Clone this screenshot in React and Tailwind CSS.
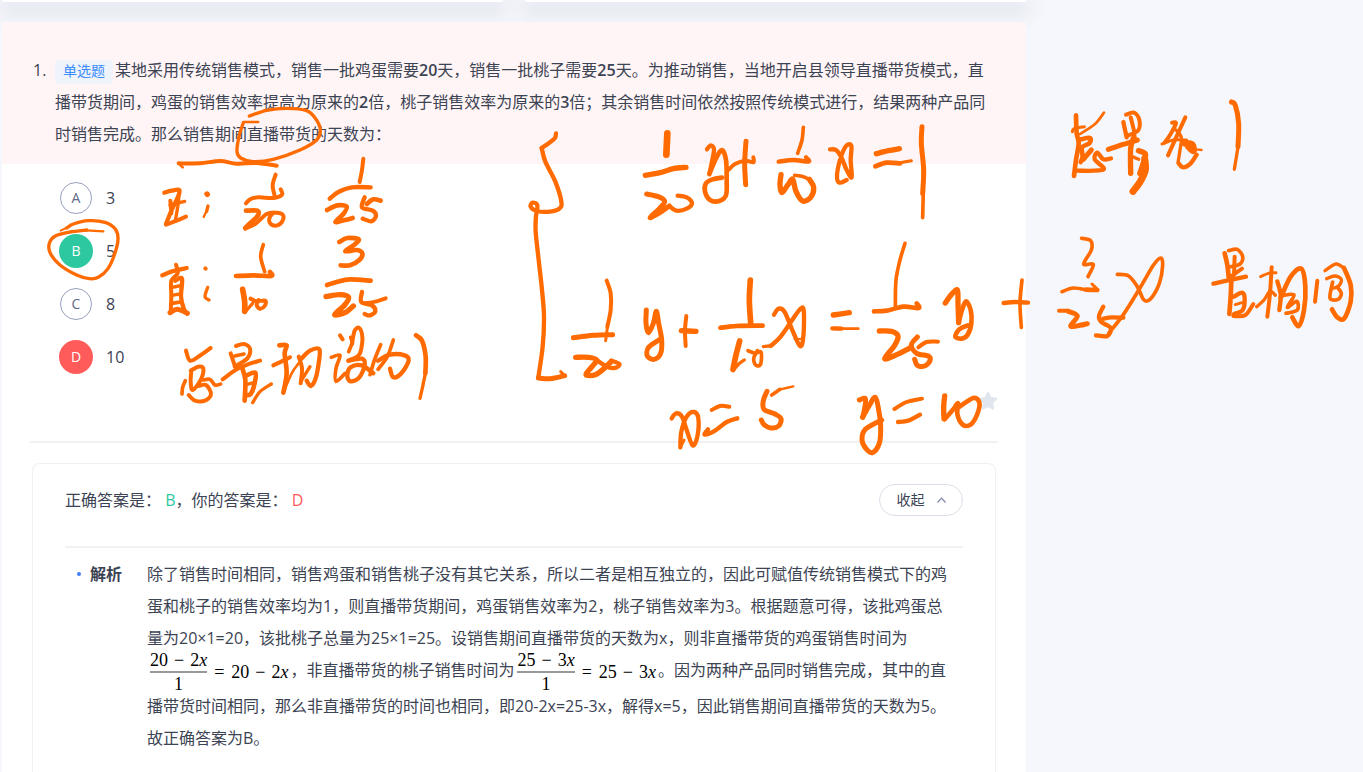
import React from "react";

/* Pen strokes: each group has an origin on the page and strokes of
   [width, x1, y1, x2, y2, ...] on a grid three times finer than the page. */
const INK = [
  { x: 0, y: 0, strokes: [
    [9, 748,348, 800,331, 860,325, 920,332, 948,358, 961,390, 950,420, 900,450, 820,478, 760,485, 722,474, 711,455, 717,410, 730,368],
    [6, 730,366, 775,366],
    [11, 536,490, 600,490, 660,483, 710,491, 770,489, 830,497],
    [7, 536,490, 548,502],
  ]},
  { x: 30, y: 150, strokes: [
    [9, 110,234, 130,222, 175,212, 225,217, 256,237, 264,268, 254,312, 234,356, 205,382, 178,386, 140,375, 90,345, 61,310, 58,280, 76,258, 120,246, 170,240],
    [5, 92,242, 120,228],
    [6, 168,241, 220,244],
    [12, 403,128, 425,122, 448,120, 444,140, 425,180, 408,222],
    [11, 408,224, 440,212, 468,200],
    [11, 421,152, 424,190],
    [9, 420,165, 464,154],
    [9, 448,122, 444,165, 436,212],
    [15, 531,132, 532,133],
    [9, 534,168, 530,184],
    [6, 531,180, 521,201],
    [12, 397,376, 430,363, 470,354],
    [11, 438,344, 443,370, 424,392, 424,440, 422,486],
    [12, 436,392, 456,386, 453,440, 462,478, 472,490],
    [14, 420,488, 442,478, 472,490],
    [9, 426,412, 452,407],
    [9, 426,436, 450,432],
    [10, 426,460, 452,456],
    [11, 526,355, 527,356],
    [9, 533,412, 525,440, 537,450],
    [11, 468,602, 480,632, 508,618, 542,594],
    [11, 482,662, 505,650, 520,656, 512,690, 488,720, 482,695, 484,662],
    [10, 466,692, 458,712, 456,732],
    [11, 476,735, 495,752, 525,752, 543,732, 528,705, 506,708],
    [10, 520,690, 540,688, 555,705, 572,702],
  ]},
  { x: 230, y: 90, strokes: [
    [11, 2,790, 14,826],
    [11, 18,768, 42,762, 60,776, 52,805, 14,830],
    [10, 14,798, 42,792],
    [11, -22,868, 20,838, 56,822, 90,812],
    [13, 36,832, 46,870, 44,932],
    [13, 50,856, 76,848, 74,880, 62,912, 46,915],
    [9, 48,884, 72,878],
    [9, 68,938, 90,905, 124,882],
    [13, 148,766, 170,766, 164,790, 170,850, 160,908],
    [11, 130,826, 160,812, 180,802],
    [7, 160,908, 185,850, 206,820],
    [11, 206,800, 216,835, 212,880],
    [12, 214,806, 240,782, 268,778, 266,820, 256,868, 242,888, 230,872],
    [9, 214,872, 240,830],
    [11, 330,736, 338,748],
    [10, 304,802, 330,796, 318,835, 318,874, 345,850],
    [10, 356,785, 366,758, 362,742],
    [11, 366,762, 374,722, 388,714, 397,740, 394,775, 386,796, 355,812],
    [12, 355,812, 396,806, 404,826, 388,862, 362,874, 352,858, 362,832, 395,826, 430,850],
    [10, 420,854, 434,808, 452,764],
    [10, 490,750, 472,800, 444,838],
    [12, 444,812, 480,794, 524,796, 536,812, 514,850, 490,862, 480,836],
    [13, 558,736, 576,752, 587,800, 586,850],
    [9, 587,845, 578,890, 570,925],
    [11, 137,254, 128,285, 134,318],
    [11, 152,298, 156,314, 130,324, 85,322, 60,328, 48,340],
    [13, 48,362, 82,362, 84,376, 62,398, 46,414],
    [11, 46,416, 78,400, 110,372, 140,368, 158,374, 158,392, 142,406, 122,402, 118,385, 128,370],
    [11, 400,206, 396,240, 389,276],
    [12, 299,326, 325,306, 365,292, 422,292],
    [13, 291,360, 322,346, 350,350, 340,372, 316,396, 345,390, 368,384],
    [12, 404,322, 396,352, 428,362, 438,378, 424,394, 398,386],
    [13, 410,342, 430,328, 452,332],
    [10, 100,464, 92,500, 104,545],
    [13, 18,558, 70,556, 124,558, 120,546],
    [16, 38,598, 44,635, 44,664],
    [9, 46,665, 68,640],
    [11, 62,626, 80,634, 106,632, 104,648, 90,656, 80,645, 86,630],
    [13, 328,456, 352,444, 386,448, 372,465, 346,484, 380,480, 397,490, 388,510, 360,526, 332,526],
    [13, 291,585, 320,576, 360,568, 422,572],
    [15, 288,620, 330,614, 356,622, 344,645, 314,674, 345,668, 370,648],
    [12, 396,606, 394,636, 426,646, 436,664, 420,676, 404,672],
    [11, 404,640, 440,634, 467,625],
  ]},
  { x: 510, y: 110, strokes: [
    [12, 138,70, 135,84, 118,98, 95,114],
    [12, 95,114, 106,155, 136,215, 154,275, 148,296, 120,305, 80,303, 62,290, 68,278, 82,286, 78,320, 77,365, 86,450, 96,540, 102,620, 98,710, 85,802],
    [14, 85,804, 120,806, 164,797],
    [8, 164,797, 152,785],
    [19, 472,70, 469,134],
    [15, 406,196, 450,188, 490,176, 528,172],
    [14, 410,252, 445,260, 464,274, 448,296, 420,323, 450,308, 478,288],
    [12, 478,288, 500,302, 530,296, 546,280, 530,262, 503,257],
    [11, 290,512, 302,550, 302,600, 292,650],
    [8, 293,645, 287,692],
    [14, 190,683, 250,676, 308,674],
    [15, 197,742, 235,742, 260,750, 244,772, 228,794, 256,794, 284,774, 304,754],
    [12, 304,752, 328,762, 318,773, 295,772, 262,752],
    [14, 409,600, 408,640, 415,668, 430,640, 439,604, 446,640, 455,690, 452,730, 432,748, 412,738, 416,712, 450,688],
    [11, 529,618, 525,660, 527,708],
    [15, 514,662, 558,664],
    [10, 630,654, 666,648],
  ]},
  { x: 700, y: 110, strokes: [
    [12, 21,118, 32,106, 42,118, 36,155, 28,192],
    [13, 28,192, 48,145, 66,120, 78,150, 80,210, 78,256, 58,273, 30,270, 15,245, 18,220, 38,208, 66,203],
    [11, 85,180, 105,162, 135,152, 160,157, 160,142],
    [14, 138,94, 134,160, 137,224],
    [10, 310,52, 306,90, 293,130],
    [12, 236,155, 280,150, 326,155, 318,142],
    [15, 243,194, 240,225, 246,248, 264,224, 278,208, 288,244, 308,273, 332,262, 341,232, 328,208],
    [10, 330,210, 310,200, 284,196],
    [12, 390,118, 408,120, 424,142, 440,180, 455,202, 452,150, 454,108, 438,108, 420,150, 411,198, 418,218, 440,210],
    [15, 529,131, 565,122, 598,116],
    [13, 526,169, 560,158, 600,160],
    [8, 598,159, 634,152],
    [14, 666,50, 664,100, 671,180, 668,250],
    [10, 670,240, 668,323],
  ]},
  { x: 700, y: 260, strokes: [
    [10, 615,-50, 600,0, 588,60, 586,140],
    [13, 522,154, 560,152, 610,140, 656,144, 650,130],
    [15, 538,213, 575,214, 594,228, 584,256, 554,296, 590,284, 630,264],
    [14, 652,231, 634,255, 650,280, 685,288, 690,302, 674,318, 652,316, 644,298],
    [11, 655,262, 680,246, 714,245],
    [15, 736,129, 754,104, 772,90, 774,130, 776,188],
    [13, 776,188, 786,150, 798,124, 812,150, 814,190, 802,226, 784,236, 766,230, 778,208, 804,196],
    [12, 911,129, 945,126, 984,128],
    [10, 966,60, 960,130, 964,202],
    [16, 151,60, 148,120, 152,188],
    [13, 62,203, 110,198, 188,197],
    [16, 119,243, 108,285, 99,328],
    [9, 99,332, 116,312, 133,300],
    [10, 144,272, 165,280, 183,276, 182,312, 168,316, 161,296, 172,272],
    [12, 222,164, 236,146, 254,156, 276,208, 300,258, 310,230, 311,150, 298,150, 270,190, 240,232, 212,258],
    [9, 214,257, 190,260],
    [5, 284,238, 306,236],
    [15, 400,165, 448,158],
    [12, 397,205, 425,206],
    [7, 425,206, 475,206],
    [11, 35,450, 60,438, 88,440],
    [12, 112,475, 80,486, 45,512, 14,524, 24,508],
    [14, 201,394, 190,422, 192,448, 225,462, 243,476, 236,498, 212,504, 192,494, 184,480],
    [10, 215,405, 240,388],
    [6, 238,389, 280,379],
    [14, 478,420, 496,416, 494,445, 488,472],
    [14, 488,472, 508,436, 526,412, 536,450, 542,500, 538,550, 518,578, 498,566, 486,540, 496,508, 545,480],
    [11, 583,447, 620,426, 666,416],
    [12, 594,486, 625,482, 660,464],
    [15, 734,408, 731,440, 732,476],
    [13, 734,478, 760,448, 774,430, 772,462, 788,494, 812,494, 832,462, 838,428, 820,414, 776,442],
  ]},
  { x: 560, y: 270, strokes: [
    [12, 335,445, 348,430, 366,440, 380,480, 398,526, 412,500, 415,445, 402,426, 380,440, 364,485, 361,532],
    [8, 361,532, 372,510],
  ]},
  { x: 1040, y: 80, strokes: [
    [13, 108,106, 110,160, 116,190, 108,240, 102,288],
    [8, 97,155, 102,146, 133,140],
    [7, 192,98, 165,132, 120,162],
    [13, 122,178, 150,174, 148,190, 126,202, 128,230, 122,246],
    [14, 130,238, 154,210],
    [12, 106,272, 190,269, 164,238, 172,218, 190,238, 213,235],
    [12, 250,126, 260,172],
    [11, 258,104, 282,98, 298,120, 294,152, 264,166],
    [11, 272,112, 284,160],
    [14, 205,208, 240,196, 292,180],
    [15, 282,170, 272,205, 272,280],
    [16, 296,212, 316,222, 310,250, 300,280],
    [20, 314,236, 316,270, 300,306, 279,334],
    [9, 278,230, 296,238],
    [11, 396,128, 408,130, 390,165, 374,188],
    [8, 366,192, 400,180, 440,180],
    [11, 436,112, 414,160, 384,226],
    [9, 408,150, 424,172, 420,210, 414,248],
    [12, 416,250, 430,262, 452,250, 470,224],
    [20, 436,190, 456,194, 460,212, 446,200],
    [6, 465,208, 485,210],
    [14, 574,66, 586,76, 596,130, 594,200],
    [9, 595,195, 583,268],
    [10, 125,475, 152,482, 154,510, 131,552, 160,553, 144,590],
    [10, 66,635, 100,624, 140,630],
    [13, 138,629, 172,630],
    [8, 172,628, 156,612],
    [11, 57,692, 85,692],
    [14, 85,694, 112,708, 92,738, 120,736, 142,731],
    [12, 190,680, 177,708, 184,726, 212,744, 202,768, 168,766],
    [12, 190,716, 215,712, 250,713],
    [10, 206,760, 250,704, 300,624, 340,556, 362,534, 368,556, 358,610, 332,656, 312,660, 292,620, 266,588, 232,583],
    [13, 554,520, 562,555, 566,592],
    [10, 566,512, 592,508, 608,530, 600,552, 572,560],
    [11, 584,530, 582,585],
    [11, 572,590, 606,566],
    [12, 520,611, 550,604, 618,590],
    [13, 574,600, 572,650, 568,702],
    [12, 582,650, 606,638, 614,655, 608,690, 582,702],
    [8, 586,674, 606,668],
    [11, 580,708, 615,706, 640,672],
    [8, 662,590, 685,580, 708,578],
    [11, 695,562, 690,640, 682,710],
    [9, 650,680, 672,660, 690,634, 706,646],
    [12, 712,604, 722,645, 718,690],
    [13, 722,654, 752,590, 784,566, 796,620, 792,690, 776,738, 757,712],
    [10, 730,646, 762,645, 742,682, 770,664, 772,690, 738,700],
    [11, 832,602, 825,665],
    [9, 855,572, 888,552, 914,566],
    [13, 912,564, 932,615, 932,665, 912,716, 892,712, 876,688],
    [9, 860,596, 884,588, 904,598, 896,618, 876,626],
    [10, 892,622, 904,640, 894,658, 870,654, 878,606],
  ]},
];

/* Smooth curve through the stroke's points (Catmull-Rom as cubic Béziers). */
function curve([, ...n]) {
  const p = [];
  for (let i = 0; i < n.length; i += 2) p.push([n[i], n[i + 1]]);
  let d = `M${p[0][0]} ${p[0][1]}`;
  for (let i = 0; i < p.length - 1; i++) {
    const a = p[i - 1] || p[i], b = p[i], c = p[i + 1], e = p[i + 2] || c;
    d += `C${b[0] + (c[0] - a[0]) / 6} ${b[1] + (c[1] - a[1]) / 6} ${c[0] - (e[0] - b[0]) / 6} ${c[1] - (e[1] - b[1]) / 6} ${c[0]} ${c[1]}`;
  }
  return d;
}

function Ink() {
  return (
    <svg
      aria-hidden="true"
      className="pointer-events-none absolute top-0 left-0 h-[772px] w-[1363px]"
      viewBox="0 0 1363 772"
      fill="none"
      stroke="#ff6b00"
      strokeLinecap="round"
      strokeLinejoin="round"
    >
      {INK.map((g, i) => (
        <g key={i} transform={`translate(${g.x} ${g.y}) scale(${1 / 3})`}>
          {g.strokes.map((s, j) => (
            <path key={j} d={curve(s)} strokeWidth={s[0] + 1} />
          ))}
        </g>
      ))}
    </svg>
  );
}

const OPTIONS = [
  { letter: "A", value: "3", look: "size-8 border border-[#98a1bb] text-[#5f6b8a]" },
  { letter: "B", value: "5", look: "size-[34px] bg-[#2dc8a0] text-white" },
  { letter: "C", value: "8", look: "size-8 border border-[#98a1bb] text-[#5f6b8a]" },
  { letter: "D", value: "10", look: "size-[34px] bg-[#ff5b5b] text-white" },
];

function Num({ children }) {
  return <b className="font-semibold">{children}</b>;
}

function Equation({ n, k }) {
  const expr = (
    <span className="flex gap-[6px]">
      <span>{n}</span>
      <span>−</span>
      <span>{k}<i>x</i></span>
    </span>
  );
  return (
    <span className="mr-0.5 ml-[3px] inline-flex h-9 items-center gap-[7px] align-middle font-['Liberation_Serif',serif] text-lg leading-[22px] text-black">
      <span className="flex flex-col items-center">
        {expr}
        <span className="h-0.5 w-full bg-[#999]" />
        <span>1</span>
      </span>
      <span>=</span>
      {expr}
    </span>
  );
}

export default function App() {
  return (
    <div
      lang="zh-CN"
      className="relative flex min-h-screen flex-col overflow-hidden bg-[#f5f7fc] pl-0.5 font-['Open_Sans','Noto_Sans_CJK_SC',sans-serif] text-base text-[#3c4353]"
    >
      <div className="flex w-full max-w-[1024px] flex-1 flex-col">
        <div className="flex gap-[22px] pb-5">
          <div className="h-0.5 flex-1 rounded-b-lg bg-white shadow-[0_6px_20px_4px_rgba(60,70,100,0.16)]" />
          <div className="h-0.5 flex-1 rounded-b-lg bg-white shadow-[0_6px_20px_4px_rgba(60,70,100,0.16)]" />
        </div>

        <main className="relative flex flex-1 flex-col bg-white">
          <section className="flex bg-[#fff5f6] pt-8 pr-8 pb-[14px] pl-[31px] leading-8">
            <span className="w-[22px] shrink-0">1.</span>
            <p className="flex-1">
              <span className="mr-[2px] inline-block h-6 rounded bg-[#eff3fa] px-2 align-middle text-sm leading-[22px] text-[#3b8cff]">单选题</span>
              某地采用传统销售模式，销售一批鸡蛋需要<Num>20</Num>天，销售一批桃子需要<Num>25</Num>天。为推动销售，当地开启县领导直播带货模式，直播带货期间，鸡蛋的销售效率提高为原来的<Num>2</Num>倍，桃子销售效率为原来的<Num>3</Num>倍；其余销售时间依然按照传统模式进行，结果两种产品同时销售完成。那么销售期间直播带货的天数为：
            </p>
          </section>

          <div className="flex flex-col items-start gap-[19px] pt-[17px] pl-14">
            {OPTIONS.map((o) => (
              <button key={o.letter} type="button" className="flex h-[34px] items-center gap-3">
                <span className="flex w-9 justify-center">
                  <span className={`flex items-center justify-center rounded-full text-sm ${o.look}`}>{o.letter}</span>
                </span>
                <span>{o.value}</span>
              </button>
            ))}
          </div>

          <div className="mx-7 flex justify-end border-b-2 border-[#f1f1f3] pt-[17px] pb-[30px]">
            <button type="button" aria-label="收藏" className="size-5">
              <svg viewBox="0 0 20 20" fill="#e1e5ee" stroke="#e1e5ee" strokeWidth="2" strokeLinejoin="round">
                <path d="M10 1.8 12.5 7l5.700.8-4.100 4 1 5.700L10 14.800 4.900 17.500l1-5.700-4.100-4L7.500 7Z" />
              </svg>
            </button>
          </div>

          <section className="mx-[30px] mt-5 flex flex-1 flex-col rounded-t-lg border border-b-0 border-[#f0f0f2] px-8 pt-5">
            <div className="flex items-start justify-between border-b-2 border-[#f1f1f3] pb-[30px]">
              <p className="leading-8">
                正确答案是： <span className="text-[#2dc8a0]">B</span>，你的答案是： <span className="text-[#ff5b5b]">D</span>
              </p>
              <button type="button" className="flex h-8 w-[84px] items-center justify-center gap-3 rounded-full border border-[#dcdfe8] text-sm">
                收起
                <svg className="size-[9px]" viewBox="0 0 9 9" fill="none" stroke="#7a86a8" strokeWidth="1.2">
                  <path d="M.5 6.500 4.500 2.200l4 4.300" />
                </svg>
              </button>
            </div>
            <div className="flex pt-[10px] pr-3 pl-3 leading-8">
              <h2 className="flex h-8 w-[70px] shrink-0 items-center gap-[9px] font-bold">
                <span className="size-1 rounded-full bg-[#3f7cff]" />
                解析
              </h2>
              <div className="flex-1">
                <p>
                  除了销售时间相同，销售鸡蛋和销售桃子没有其它关系，所以二者是相互独立的，因此可赋值传统销售模式下的鸡蛋和桃子的销售效率均为1，则直播带货期间，鸡蛋销售效率为2，桃子销售效率为3。根据题意可得，该批鸡蛋总量为20×1=20，该批桃子总量为25×1=25。设销售期间直播带货的天数为x，则非直播带货的鸡蛋销售时间为
                  <Equation n="20" k="2" />，非直播带货的桃子销售时间为<Equation n="25" k="3" />。因为两种产品同时销售完成，其中的直播带货时间相同，那么非直播带货的时间也相同，即20-2x=25-3x，解得x=5，因此销售期间直播带货的天数为5。
                </p>
                <p>故正确答案为B。</p>
              </div>
            </div>
          </section>
        </main>
      </div>
      <Ink />
    </div>
  );
}
